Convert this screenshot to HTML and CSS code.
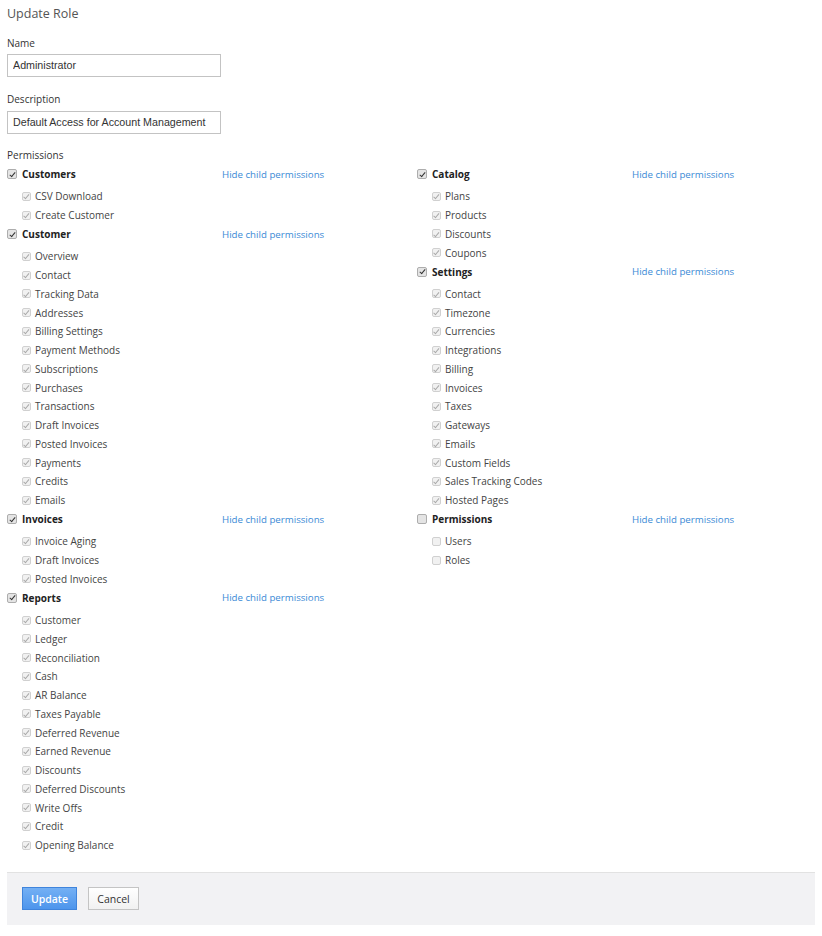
FILE: index.html
```html
<!DOCTYPE html>
<html>
<head>
<meta charset="utf-8">
<link rel="stylesheet" href="styles.css">
</head>
<body>
<div class="page">
  <h1 class="title">Update Role</h1>
  <div class="field">
    <div class="label">Name</div>
    <input class="input" type="text" value="Administrator">
  </div>
  <div class="field field-2">
    <div class="label">Description</div>
    <input class="input" type="text" value="Default Access for Account Management">
  </div>
  <div class="label perm-label">Permissions</div>
  <div class="perms">
    <div class="col col-left">
      <div class="group">
        <div class="head"><span class="name"><span class="cb on"></span>Customers</span><a class="link">Hide child permissions</a></div>
        <div class="kids">
          <div class="kid"><span class="cb sub on"></span>CSV Download</div>
          <div class="kid"><span class="cb sub on"></span>Create Customer</div>
        </div>
      </div>
      <div class="group">
        <div class="head"><span class="name"><span class="cb on"></span>Customer</span><a class="link">Hide child permissions</a></div>
        <div class="kids">
          <div class="kid"><span class="cb sub on"></span>Overview</div>
          <div class="kid"><span class="cb sub on"></span>Contact</div>
          <div class="kid"><span class="cb sub on"></span>Tracking Data</div>
          <div class="kid"><span class="cb sub on"></span>Addresses</div>
          <div class="kid"><span class="cb sub on"></span>Billing Settings</div>
          <div class="kid"><span class="cb sub on"></span>Payment Methods</div>
          <div class="kid"><span class="cb sub on"></span>Subscriptions</div>
          <div class="kid"><span class="cb sub on"></span>Purchases</div>
          <div class="kid"><span class="cb sub on"></span>Transactions</div>
          <div class="kid"><span class="cb sub on"></span>Draft Invoices</div>
          <div class="kid"><span class="cb sub on"></span>Posted Invoices</div>
          <div class="kid"><span class="cb sub on"></span>Payments</div>
          <div class="kid"><span class="cb sub on"></span>Credits</div>
          <div class="kid"><span class="cb sub on"></span>Emails</div>
        </div>
      </div>
      <div class="group">
        <div class="head"><span class="name"><span class="cb on"></span>Invoices</span><a class="link">Hide child permissions</a></div>
        <div class="kids">
          <div class="kid"><span class="cb sub on"></span>Invoice Aging</div>
          <div class="kid"><span class="cb sub on"></span>Draft Invoices</div>
          <div class="kid"><span class="cb sub on"></span>Posted Invoices</div>
        </div>
      </div>
      <div class="group">
        <div class="head"><span class="name"><span class="cb on"></span>Reports</span><a class="link">Hide child permissions</a></div>
        <div class="kids">
          <div class="kid"><span class="cb sub on"></span>Customer</div>
          <div class="kid"><span class="cb sub on"></span>Ledger</div>
          <div class="kid"><span class="cb sub on"></span>Reconciliation</div>
          <div class="kid"><span class="cb sub on"></span>Cash</div>
          <div class="kid"><span class="cb sub on"></span>AR Balance</div>
          <div class="kid"><span class="cb sub on"></span>Taxes Payable</div>
          <div class="kid"><span class="cb sub on"></span>Deferred Revenue</div>
          <div class="kid"><span class="cb sub on"></span>Earned Revenue</div>
          <div class="kid"><span class="cb sub on"></span>Discounts</div>
          <div class="kid"><span class="cb sub on"></span>Deferred Discounts</div>
          <div class="kid"><span class="cb sub on"></span>Write Offs</div>
          <div class="kid"><span class="cb sub on"></span>Credit</div>
          <div class="kid"><span class="cb sub on"></span>Opening Balance</div>
        </div>
      </div>
    </div>
    <div class="col col-right">
      <div class="group">
        <div class="head"><span class="name"><span class="cb on"></span>Catalog</span><a class="link">Hide child permissions</a></div>
        <div class="kids">
          <div class="kid"><span class="cb sub on"></span>Plans</div>
          <div class="kid"><span class="cb sub on"></span>Products</div>
          <div class="kid"><span class="cb sub on"></span>Discounts</div>
          <div class="kid"><span class="cb sub on"></span>Coupons</div>
        </div>
      </div>
      <div class="group">
        <div class="head"><span class="name"><span class="cb on"></span>Settings</span><a class="link">Hide child permissions</a></div>
        <div class="kids">
          <div class="kid"><span class="cb sub on"></span>Contact</div>
          <div class="kid"><span class="cb sub on"></span>Timezone</div>
          <div class="kid"><span class="cb sub on"></span>Currencies</div>
          <div class="kid"><span class="cb sub on"></span>Integrations</div>
          <div class="kid"><span class="cb sub on"></span>Billing</div>
          <div class="kid"><span class="cb sub on"></span>Invoices</div>
          <div class="kid"><span class="cb sub on"></span>Taxes</div>
          <div class="kid"><span class="cb sub on"></span>Gateways</div>
          <div class="kid"><span class="cb sub on"></span>Emails</div>
          <div class="kid"><span class="cb sub on"></span>Custom Fields</div>
          <div class="kid"><span class="cb sub on"></span>Sales Tracking Codes</div>
          <div class="kid"><span class="cb sub on"></span>Hosted Pages</div>
        </div>
      </div>
      <div class="group">
        <div class="head"><span class="name"><span class="cb"></span>Permissions</span><a class="link">Hide child permissions</a></div>
        <div class="kids">
          <div class="kid"><span class="cb sub"></span>Users</div>
          <div class="kid"><span class="cb sub"></span>Roles</div>
        </div>
      </div>
    </div>
  </div>
  <div class="footer">
    <button class="btn btn-primary">Update</button>
    <button class="btn btn-default">Cancel</button>
  </div>
</div>
</body>
</html>
```
FILE: styles.css
```css
html, body {
  margin: 0;
  padding: 0;
  background: #ffffff;
}
body {
  font-family: "Open Sans", "Noto Sans", sans-serif;
  font-size: 10px;
  color: #333333;
}
.page {
  padding: 0 7px;
}
.title {
  margin: 4px 0 0;
  font-size: 12.5px;
  line-height: 20px;
  font-weight: 400;
  color: #555555;
}
.field {
  margin-top: 11px;
}
.field-2 {
  margin-top: 14px;
}
.label {
  line-height: 16px;
  color: #333333;
}
.input {
  display: block;
  box-sizing: border-box;
  width: 214px;
  height: 23px;
  margin: 3px 0 0;
  padding: 0 5px 1px;
  border: 1px solid #c3c3c3;
  border-radius: 0;
  font-family: "Liberation Sans", Arial, sans-serif;
  font-size: 10.7px;
  color: #333333;
  background: #ffffff;
  outline: none;
}
.field-2 .input {
  margin-top: 4px;
}
.perm-label {
  margin-top: 13px;
}
.perms {
  display: flex;
  margin-top: 1.5px;
}
.col-left {
  flex: none;
  width: 410px;
}
.col-right {
  flex: 1;
  min-width: 0;
}
.head {
  display: flex;
  align-items: center;
  height: 19px;
  margin-bottom: 3.5px;
}
.name {
  display: flex;
  align-items: center;
  width: 215px;
  font-weight: 700;
  color: #222222;
}
.link {
  color: #3a8ad6;
  font-size: 9.7px;
  cursor: pointer;
}
.kids {
  padding-left: 15px;
}
.kid {
  display: flex;
  align-items: center;
  height: 18.75px;
  color: #444444;
}
.cb {
  position: relative;
  box-sizing: border-box;
  flex: none;
  width: 10px;
  height: 10px;
  margin-right: 5px;
  border: 1px solid #adadad;
  border-radius: 2px;
  background: #e4e4e4;
}
.cb.on::after {
  content: "";
  position: absolute;
  left: 2.5px;
  top: 0.5px;
  width: 2px;
  height: 5px;
  border: solid #333333;
  border-width: 0 1.5px 1.5px 0;
  transform: rotate(40deg);
}
.cb.sub {
  width: 9px;
  height: 9px;
  margin-right: 4px;
  border-color: #d0d0d0;
  background: #f1f1f1;
}
.cb.sub.on::after {
  left: 2.3px;
  top: 0.3px;
  width: 1.8px;
  height: 4.5px;
  border-color: #a8a8a8;
  border-width: 0 1.2px 1.2px 0;
}
.footer {
  display: flex;
  gap: 11px;
  margin-top: 17.5px;
  padding: 14px 15px 15px;
  border-top: 1px solid #e2e2e2;
  background: #f2f2f4;
}
.btn {
  box-sizing: border-box;
  height: 23px;
  padding: 0;
  font-family: "Open Sans", "Noto Sans", sans-serif;
  font-size: 10.5px;
  cursor: pointer;
}
.btn-primary {
  width: 55px;
  border: 1px solid #3f84dc;
  background: linear-gradient(#74b0f4, #4d95ec);
  color: #ffffff;
  font-weight: 600;
}
.btn-default {
  width: 51px;
  border: 1px solid #c4c4c4;
  background: linear-gradient(#ffffff, #f1f1f1);
  color: #333333;
}
```
